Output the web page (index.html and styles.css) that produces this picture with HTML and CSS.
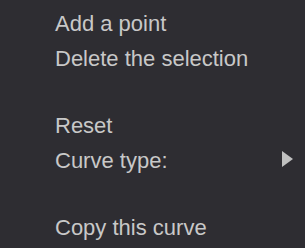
FILE: index.html
```html
<!DOCTYPE html>
<html>
	<head>
		<meta charset="UTF-8">
		<title></title>
		<link rel="stylesheet" href="styles.css">
	</head>
	<body>
		<ul class="menu">
			<li class="item">Add a point</li>
			<li class="item">Delete the selection</li>
			<li class="sep"></li>
			<li class="item">Reset</li>
			<li class="item sub">Curve type:<span class="arrow"></span></li>
			<li class="sep"></li>
			<li class="item">Copy this curve</li>
		</ul>
	</body>
</html>
```

FILE: styles.css
```css
* {
	margin: 0;
	padding: 0;
}

ul, li {
	list-style: none;
}

html, body {
	height: 100%;
}

body {
	background: #2e2d32;
	font-family: "Liberation Sans", Arial, sans-serif;
	font-size: 22px;
	color: #c8c8c8;
}

.menu {
	padding-top: 6px;
}

.item {
	height: 35px;
	line-height: 35px;
	padding-left: 55px;
	padding-right: 12px;
	display: flex;
	align-items: center;
	justify-content: space-between;
	white-space: nowrap;
}

.sep {
	height: 32px;
}

.arrow {
	width: 0;
	height: 0;
	border-top: 8px solid transparent;
	border-bottom: 8px solid transparent;
	border-left: 11px solid #c0c0c0;
	margin-top: -3px;
}
```
